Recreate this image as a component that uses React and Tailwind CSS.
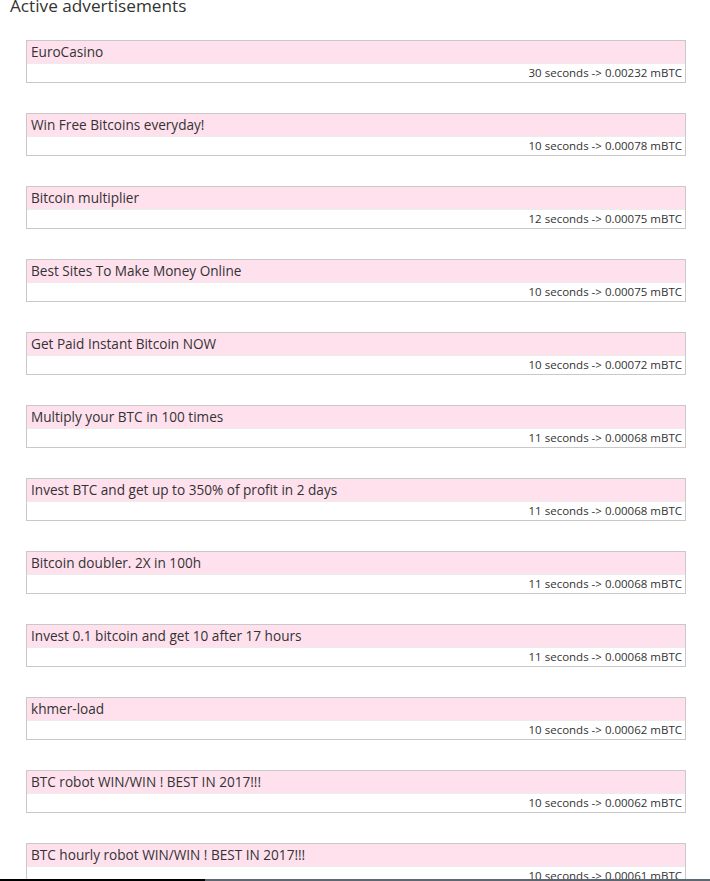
import React from 'react';

const ADS = [
  { title: 'EuroCasino', secs: 30, reward: '0.00232' },
  { title: 'Win Free Bitcoins everyday!', secs: 10, reward: '0.00078' },
  { title: 'Bitcoin multiplier', secs: 12, reward: '0.00075' },
  { title: 'Best Sites To Make Money Online', secs: 10, reward: '0.00075' },
  { title: 'Get Paid Instant Bitcoin NOW', secs: 10, reward: '0.00072' },
  { title: 'Multiply your BTC in 100 times', secs: 11, reward: '0.00068' },
  { title: 'Invest BTC and get up to 350% of profit in 2 days', secs: 11, reward: '0.00068' },
  { title: 'Bitcoin doubler. 2X in 100h', secs: 11, reward: '0.00068' },
  { title: 'Invest 0.1 bitcoin and get 10 after 17 hours', secs: 11, reward: '0.00068' },
  { title: 'khmer-load', secs: 10, reward: '0.00062' },
  { title: 'BTC robot WIN/WIN ! BEST IN 2017!!!', secs: 10, reward: '0.00062' },
  { title: 'BTC hourly robot WIN/WIN ! BEST IN 2017!!!', secs: 10, reward: '0.00061' },
];

function AdCard({ ad }) {
  return (
    <div className="w-[660px] border border-[#c9c9c9] bg-white">
      <div className="h-[23px] bg-[#ffe1ee] border-b border-[#ececec] pl-[4px] text-[13.6px] leading-[22px] text-[#333]">
        {ad.title}
      </div>
      <div className="h-[18px] pr-[3px] text-right text-[11.5px] leading-[18px] text-[#333]">
        {ad.secs} seconds -&gt; {ad.reward} mBTC
      </div>
    </div>
  );
}

export default function App() {
  return (
    <div className="relative min-h-screen bg-white" style={{ fontFamily: '"Open Sans", "DejaVu Sans", sans-serif' }}>
      <h2 className="pl-[10px] -mt-[7px] h-[26px] text-[17.2px] font-medium leading-[26px] text-[#333]">
        Active advertisements
      </h2>
      <div className="pl-[26px] pt-[21px] flex flex-col gap-[30px] pb-4">
        {ADS.map((ad, i) => (
          <AdCard key={i} ad={ad} />
        ))}
      </div>

      {/* bottom edge strip */}
      <div className="fixed bottom-0 left-0 right-0 h-[2px] flex">
        <div className="w-[205px] bg-black" />
        <div className="flex-1 bg-[#5d6772]" />
      </div>
    </div>
  );
}
